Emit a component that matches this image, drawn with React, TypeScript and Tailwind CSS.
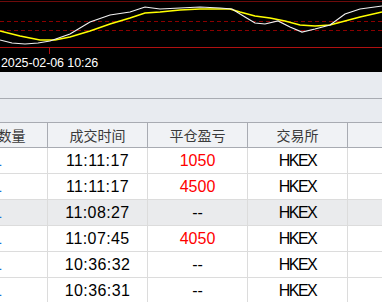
import React from "react";

const white = "0,40 12,43 25,44 38,43 50,41 70,34 90,22 110,15 130,12 145,7 160,9 180,8 200,7 220,8 232,9 245,17 255,23 265,24 278,21 290,27 302,32 315,29 330,25 345,14 360,9 382,6";
const yellow = "0,31 20,36 40,40 55,40 70,37 90,31 110,24 130,18 145,13 160,12 180,10 200,9 230,9 240,12 255,16 270,18 285,21 300,25 315,26 330,25 345,21 360,17 382,12";

const rows = [
  { time: "11:11:17", pnl: "1050" },
  { time: "11:11:17", pnl: "4500" },
  { time: "11:08:27", pnl: "--", active: true },
  { time: "11:07:45", pnl: "4050" },
  { time: "10:36:32", pnl: "--" },
  { time: "10:36:31", pnl: "--" },
];

const cell = "h-full flex items-center justify-center border-r";

export default function App() {
  return (
    <div className="w-[382px] h-[302px] overflow-hidden bg-white font-['Liberation_Sans',sans-serif]">
      {/* chart */}
      <div className="h-[72px] bg-black">
        <svg width="382" height="54" className="block">
          <line x1="0" y1="1.5" x2="382" y2="1.5" stroke="#6e0b0b" strokeWidth="1" />
          <line x1="0" y1="21.5" x2="382" y2="21.5" stroke="#8a0000" strokeWidth="1" strokeDasharray="4 3" />
          <line x1="0" y1="30.5" x2="382" y2="30.5" stroke="#8a0000" strokeWidth="1" strokeDasharray="4 3" />
          <polyline points={yellow} fill="none" stroke="#ffff00" strokeWidth="1.5" />
          <polyline points={white} fill="none" stroke="#f0f0f0" strokeWidth="1.2" />
          <line x1="0" y1="47.5" x2="382" y2="47.5" stroke="#b01010" strokeWidth="1" />
          <line x1="49.5" y1="47" x2="49.5" y2="54" stroke="#b01010" strokeWidth="1" />
        </svg>
        <div className="h-[18px] leading-[18px] pl-[1px] text-[12.5px] tracking-[-0.1px] text-white">
          2025-02-06 10:26
        </div>
      </div>

      <div className="h-[27px] bg-[#e8ebf0] border-b border-[#a8abb2]" />
      <div className="h-[23px] bg-[#e8ebf0]" />

      {/* table */}
      <div className="ml-[-52px] w-[500px]">
        <div className="grid grid-cols-[100px_100px_100px_100px_100px] h-[26px] bg-[#f0f2f5] border-y border-[#a8abb2] text-[14px] text-[#3a3a3a] font-['Noto_Sans_CJK_SC',sans-serif]">
          <div className={`${cell} border-[#a8abb2]`}>成交数量</div>
          <div className={`${cell} border-[#a8abb2]`}>成交时间</div>
          <div className={`${cell} border-[#a8abb2]`}>平仓盈亏</div>
          <div className={`${cell} border-[#a8abb2]`}>交易所</div>
          <div className={`${cell} border-[#a8abb2]`} />
        </div>
        {rows.map((r, i) => (
          <div
            key={i}
            className={`grid grid-cols-[100px_100px_100px_100px_100px] h-[26px] border-b border-[#dcdcdc] text-[16px] text-black ${r.active ? "bg-[#eaebed]" : "bg-white"}`}
          >
            <div className={`${cell} border-[#dcdcdc] text-[#1e73d8] font-['DejaVu_Sans',sans-serif]`}>1</div>
            <div className={`${cell} border-[#dcdcdc] tracking-[0.4px]`}>{r.time}</div>
            <div className={`${cell} border-[#dcdcdc] ${r.pnl === "--" ? "text-black" : "text-[#ff0000]"}`}>{r.pnl}</div>
            <div className={`${cell} border-[#dcdcdc] tracking-[-1.5px]`}>HKEX</div>
            <div className={`${cell} border-[#dcdcdc]`} />
          </div>
        ))}
      </div>
    </div>
  );
}
